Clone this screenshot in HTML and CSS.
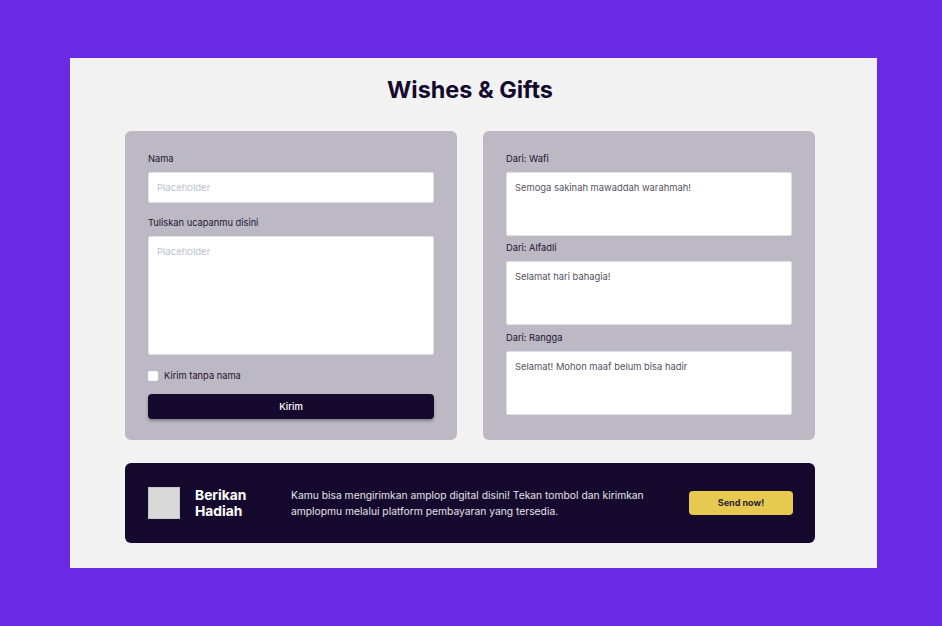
FILE: index.html
```html
<!DOCTYPE html>
<html>
<head>
<meta charset="utf-8">
<link rel="stylesheet" href="styles.css">
</head>
<body>
<main class="page">
  <h1 class="title">Wishes &amp; Gifts</h1>
  <div class="cards">
    <form class="card form-card">
      <label class="label">Nama</label>
      <div class="input">Placeholder</div>
      <label class="label label-gap">Tuliskan ucapanmu disini</label>
      <div class="input textarea">Placeholder</div>
      <div class="check-row"><span class="checkbox"></span><span>Kirim tanpa nama</span></div>
      <div class="btn-submit">Kirim</div>
    </form>
    <div class="card wish-card">
      <div class="wish">
        <div class="label">Dari: Wafi</div>
        <div class="wish-box">Semoga sakinah mawaddah warahmah!</div>
      </div>
      <div class="wish">
        <div class="label">Dari: Alfadli</div>
        <div class="wish-box">Selamat hari bahagia!</div>
      </div>
      <div class="wish">
        <div class="label">Dari: Rangga</div>
        <div class="wish-box">Selamat! Mohon maaf belum bisa hadir</div>
      </div>
    </div>
  </div>
  <section class="banner">
    <div class="gift-img"></div>
    <div class="banner-title">Berikan<br>Hadiah</div>
    <p class="banner-text">Kamu bisa mengirimkan amplop digital disini! Tekan tombol dan kirimkan amplopmu melalui platform pembayaran yang tersedia.</p>
    <div class="btn-send">Send now!</div>
  </section>
</main>
</body>
</html>
```
FILE: styles.css
```css
* { box-sizing: border-box; }
html, body { margin: 0; padding: 0; }
body {
  background: #6a2ae3;
  font-family: Inter, "Noto Sans", sans-serif;
  width: 942px;
  height: 626px;
  padding: 58px 0 0 70px;
}
.page {
  width: 807px;
  height: 510px;
  background: #f2f2f2;
  padding: 17px 0 0 55px;
}
.title {
  width: 690px;
  margin: 0;
  text-align: center;
  font-size: 23.4px;
  font-weight: 700;
  color: #150a2e;
  line-height: 30px;
}
.cards {
  width: 690px;
  display: flex;
  gap: 26px;
  margin-top: 26px;
}
.card {
  width: 332px;
  height: 309px;
  background: #bcb8c4;
  border-radius: 6px;
  margin: 0;
}
.form-card {
  padding: 21px 23px 0 23px;
  display: flex;
  flex-direction: column;
}
.label {
  font-size: 9.3px;
  color: #1c1530;
  line-height: 14px;
  display: block;
}
.label-gap { margin-top: 13px; }
.input {
  margin-top: 6px;
  height: 31px;
  background: #fff;
  border: 1px solid #dde1ea;
  border-radius: 2px;
  font-size: 9.5px;
  color: #b9c2d2;
  padding: 9px 8px;
  line-height: 12px;
}
.textarea { height: 119px; }
.check-row {
  margin-top: 15px;
  display: flex;
  align-items: center;
  gap: 6px;
  font-size: 9.3px;
  color: #1c1530;
  line-height: 12px;
}
.checkbox {
  width: 10px;
  height: 10px;
  background: #fff;
  border-radius: 2px;
}
.btn-submit {
  margin-top: 12px;
  height: 25px;
  background: #150a2e;
  border-radius: 4px;
  color: #fff;
  font-size: 9.5px;
  font-weight: 500;
  text-align: center;
  line-height: 25px;
  box-shadow: 0 2px 3px rgba(0,0,0,0.3);
}
.wish-card {
  padding: 21px 23px 0 23px;
  display: flex;
  flex-direction: column;
  gap: 5px;
}
.wish-card .wish:last-child { margin-top: 1px; }
.wish-box {
  margin-top: 6px;
  height: 64px;
  background: #fff;
  border: 1px solid #dde1ea;
  border-radius: 2px;
  font-size: 9.4px;
  color: #555261;
  padding: 9px 8px;
  line-height: 12px;
}
.banner {
  width: 690px;
  height: 80px;
  margin-top: 23px;
  background: #150a2e;
  border-radius: 6px;
  display: flex;
  align-items: center;
  padding: 0 22px 0 23px;
}
.gift-img {
  width: 32px;
  height: 32px;
  background: #d9d9d9;
  border: 1px solid #c8c8c8;
  flex: none;
}
.banner-title {
  margin-left: 15px;
  width: 96px;
  color: #fff;
  font-size: 13.8px;
  font-weight: 700;
  line-height: 16px;
  flex: none;
}
.banner-text {
  margin: 0;
  width: 375px;
  color: #e4e2ea;
  font-size: 10.3px;
  line-height: 16px;
  flex: none;
}
.btn-send {
  margin-left: auto;
  width: 104px;
  height: 24px;
  background: #e8c94f;
  border-radius: 4px;
  color: #2b2438;
  font-size: 9px;
  font-weight: 700;
  text-align: center;
  line-height: 24px;
}
```
